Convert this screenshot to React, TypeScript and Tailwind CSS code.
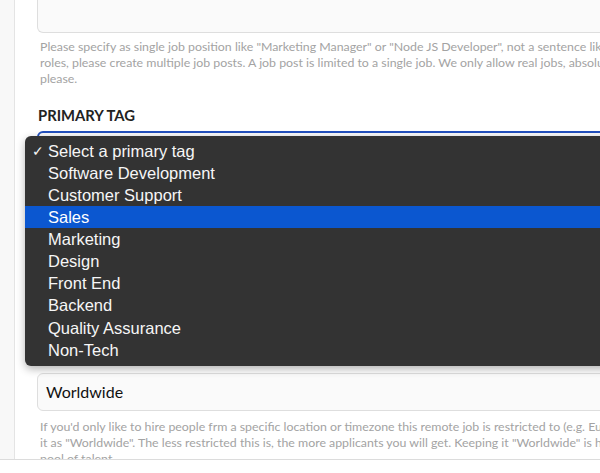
import React from 'react'

const TAGS = [
  'Select a primary tag',
  'Software Development',
  'Customer Support',
  'Sales',
  'Marketing',
  'Design',
  'Front End',
  'Backend',
  'Quality Assurance',
  'Non-Tech',
]

const SELECTED = 0
const HOVERED = 3

const bodyFont = { fontFamily: 'Lato, "Open Sans", sans-serif' }
const menuFont = { fontFamily: '"Liberation Sans", Arial, sans-serif' }

function TagMenu() {
  return (
    <div
      className="absolute left-[25px] top-[136px] w-[600px] rounded-[6px] bg-[#333333] pt-[4px] pb-[5px] shadow-[0_3px_9px_rgba(0,0,0,0.3)]"
      style={menuFont}
    >
      {TAGS.map((tag, i) => (
        <div
          key={tag}
          className={
            'flex h-[22.1px] items-center text-[16.5px] text-[#f6f6f6] ' +
            (i === HOVERED ? 'bg-[#0b57d0] text-white' : '')
          }
        >
          <span className="w-[23px] pl-[7px] text-[14px] leading-none">{i === SELECTED ? '✓' : ''}</span>
          <span className="leading-none">{tag}</span>
        </div>
      ))}
    </div>
  )
}

export default function App() {
  return (
    <div className="relative h-[473px] w-[600px] overflow-hidden bg-white" style={bodyFont}>
      <div className="flex h-[459px] overflow-hidden">
        <div className="w-[15px] shrink-0 border-r border-[#e4e4e4] bg-[#f8f8f8]" />
        <div className="flex-1 pl-[22px]">
          <div className="h-[33px] w-[620px] rounded-b-[6px] border border-t-0 border-[#dedede] bg-[#fafafa]" />
          <p className="mt-[6px] whitespace-nowrap pl-[3px] text-[12.35px] leading-[16px] text-[#a3a3a3]">
            Please specify as single job position like "Marketing Manager" or "Node JS Developer", not a sentence like
            "Looking for PM / Biz Dev / Manager". If you're hiring multiple
            <br />
            roles, please create multiple job posts. A job post is limited to a single job. We only allow real jobs, absolutely
            no MLM-type courses "learn how to work online"
            <br />
            please.
          </p>
          <h2 className="mt-[18px] pl-[1px] text-[14.8px] font-bold leading-[20px] text-[#222222]">PRIMARY TAG</h2>
          <div className="mt-[6px] h-[40px] w-[620px] rounded-[6px] border-2 border-[#2350bd] bg-[#fafafa]" />
          <div className="h-[202px]" />
          <div className="flex h-[38px] w-[620px] items-center rounded-[6px] border border-[#dedede] bg-[#fafafa] pl-[8px] text-[16px] text-[#111111]">
            Worldwide
          </div>
          <p className="mt-[8px] whitespace-nowrap pl-[3px] text-[12.35px] leading-[16px] text-[#a3a3a3]">
            If you'd only like to hire people frm a specific location or timezone this remote job is restricted to (e.g. Europe),
            please specify that here. Otherwise keep
            <br />
            it as "Worldwide". The less restricted this is, the more applicants you will get. Keeping it "Worldwide" is highly
            recommended as you'll have access to a worldwide
            <br />
            pool of talent.
          </p>
        </div>
      </div>
      <div className="h-[14px] border-t border-[#dcdcdc] bg-white" />
      <TagMenu />
    </div>
  )
}
